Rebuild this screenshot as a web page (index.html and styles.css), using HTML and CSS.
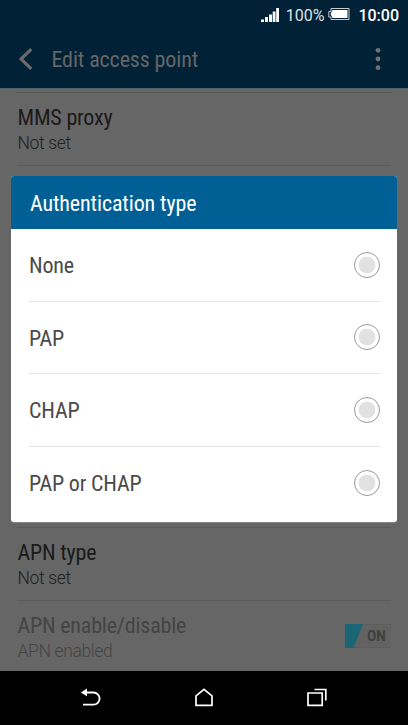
FILE: index.html
```html
<!DOCTYPE html>
<html lang="en">
<head>
<meta charset="utf-8">
<title>Edit access point</title>
<link rel="stylesheet" href="styles.css">
</head>
<body>
<div class="phone">
  <header class="top">
    <div class="status">
      <svg class="signal" width="19" height="15" viewBox="0 0 19 15" fill="#fff"><path d="M0 11.500h3V14H0zM4 9h3v5H4zM8 6.500h3V14H8zM11.700 3.500h2.800V14h-2.800zM15.200 0h2.800v14h-2.800z"/></svg>
      <span class="percent">100%</span>
      <svg class="battery" width="22" height="12" viewBox="0 0 22 12"><path d="M3 .5h18v11H3V9H.8V3.500H3z" fill="none" stroke="#c3cbd0"/><path d="M4.500 2H19.500v8H4.500L2.500 6z" fill="#fff"/></svg>
      <span class="clock">10:00</span>
    </div>
    <div class="bar">
      <svg class="back" width="14" height="22" viewBox="0 0 14 22"><path d="M12.300 1.200L2 11l10.300 9.800" fill="none" stroke="#6a6a6a" stroke-width="3.200"/></svg>
      <h1 class="cond title">Edit access point</h1>
      <svg class="more" width="6" height="24" viewBox="0 0 6 24" fill="#707070"><circle cx="3" cy="3.300" r="2.400"/><circle cx="3" cy="12" r="2.400"/><circle cx="3" cy="20.700" r="2.400"/></svg>
    </div>
  </header>
  <main class="list">
    <div class="item"><div><div class="cond name">MMS proxy</div><div class="sub">Not set</div></div></div>
    <div class="item covered"></div>
    <div class="item"><div><div class="cond name">APN type</div><div class="sub">Not set</div></div></div>
    <div class="item disabled">
      <div><div class="cond name">APN enable/disable</div><div class="sub">APN enabled</div></div>
      <div class="toggle"><svg width="18" height="24" viewBox="0 0 18 24"><path d="M0 0h18L8.500 24H0z" fill="#1a6675"/></svg><span class="cond on">ON</span></div>
    </div>
  </main>
  <nav class="nav">
    <svg width="22" height="20" viewBox="0 0 22 20"><path d="M5 4.500h8.500a6 6 0 0 1 0 12.200H3" fill="none" stroke="#fff" stroke-width="1.800"/><path d="M.8 4.500L7 .5v7.800z" fill="#fff"/></svg>
    <svg width="20" height="20" viewBox="0 0 20 20"><path d="M2 17.300V7.800L10 1.300l8 6.500v9.500z" fill="none" stroke="#fff" stroke-width="1.700"/></svg>
    <svg width="22" height="20" viewBox="0 0 22 20" fill="none" stroke="#fff" stroke-width="1.700"><path d="M2 5h14.200v12.300H2zM8.500 1.500h11.300v11"/></svg>
  </nav>
  <section class="dialog">
    <h2 class="cond heading">Authentication type</h2>
    <div class="options">
      <div class="option"><span class="cond">None</span><i class="radio"></i></div>
      <div class="option"><span class="cond">PAP</span><i class="radio"></i></div>
      <div class="option"><span class="cond">CHAP</span><i class="radio"></i></div>
      <div class="option"><span class="cond">PAP or CHAP</span><i class="radio"></i></div>
    </div>
  </section>
</div>
</body>
</html>
```
FILE: styles.css
```css
* { box-sizing: border-box; }
body { margin: 0; font-family: Roboto, "Liberation Sans", sans-serif; }
h1, h2 { margin: 0; font-weight: 400; }
svg { display: block; flex: none; }
.phone { position: relative; width: 408px; height: 725px; overflow: hidden; background: #666; display: flex; flex-direction: column; }
.cond { font-family: "Roboto Condensed", Roboto, sans-serif; font-stretch: 75%; font-size: 22px; line-height: 26px; letter-spacing: -.2px; white-space: nowrap; }
.top { height: 88px; flex: none; background: #002136; }
.status { height: 30px; display: flex; align-items: center; justify-content: flex-end; padding-right: 9px; color: #fff; font-size: 16px; }
.signal { margin-right: 1px; }
.percent { margin-left: 5px; color: #dce1e4; }
.battery { margin: -2px 8px 0 4px; }
.clock { font-weight: 500; }
.bar { height: 58px; display: flex; align-items: center; padding: 0 27px 0 19px; }
.title { margin-left: 18.500px; padding-top: 1px; flex: 1; color: #666; letter-spacing: -.12px; }
.list { height: 582.500px; flex: none; padding: 3px 17px 0; border-top: 1px solid #52636c; overflow: hidden; }
.item { height: 72.5px; border-top: 1px solid #5a5a5a; padding: 12px .5px 0; display: flex; justify-content: space-between; }
.covered { height: 362.500px; }
.name { color: #1a1a1a; }
.sub { font-size: 17.500px; line-height: 24px; font-weight: 300; letter-spacing: -.36px; color: #202020; }
.disabled .name, .disabled .sub { color: #444; }
.toggle { width: 46px; height: 24px; margin: 11px -.5px 0 0; border: solid #5d5d5d; border-width: 1px 0; display: flex; align-items: center; background: #626262; }
.on { font-size: 15.500px; font-weight: 700; color: #404040; margin-left: 4px; padding-top: 1px; }
.nav { flex: 1; background: #000; display: flex; justify-content: space-between; align-items: center; padding: 0 80px; }
.dialog { position: absolute; left: 11px; top: 176px; width: 386px; height: 346px; border-radius: 3px; overflow: hidden; background: #fff; box-shadow: 0 1px 1px #888; }
.heading { height: 53px; padding: 15px 19px 0; background: #005f94; color: #fff; letter-spacing: -.12px; }
.options { padding: 0 17px 0 18px; }
.option { height: 72.500px; display: flex; align-items: center; justify-content: space-between; color: #4a4a4a; border-bottom: 1px solid #e5e5e5; }
.option .cond { padding-top: 3px; }
.option:last-child { border: 0; }
.radio { width: 26px; height: 26px; border: 1px solid #999; border-radius: 50%; background: radial-gradient(circle, #e1e1e1 8px, #fff 8.700px); }
```
